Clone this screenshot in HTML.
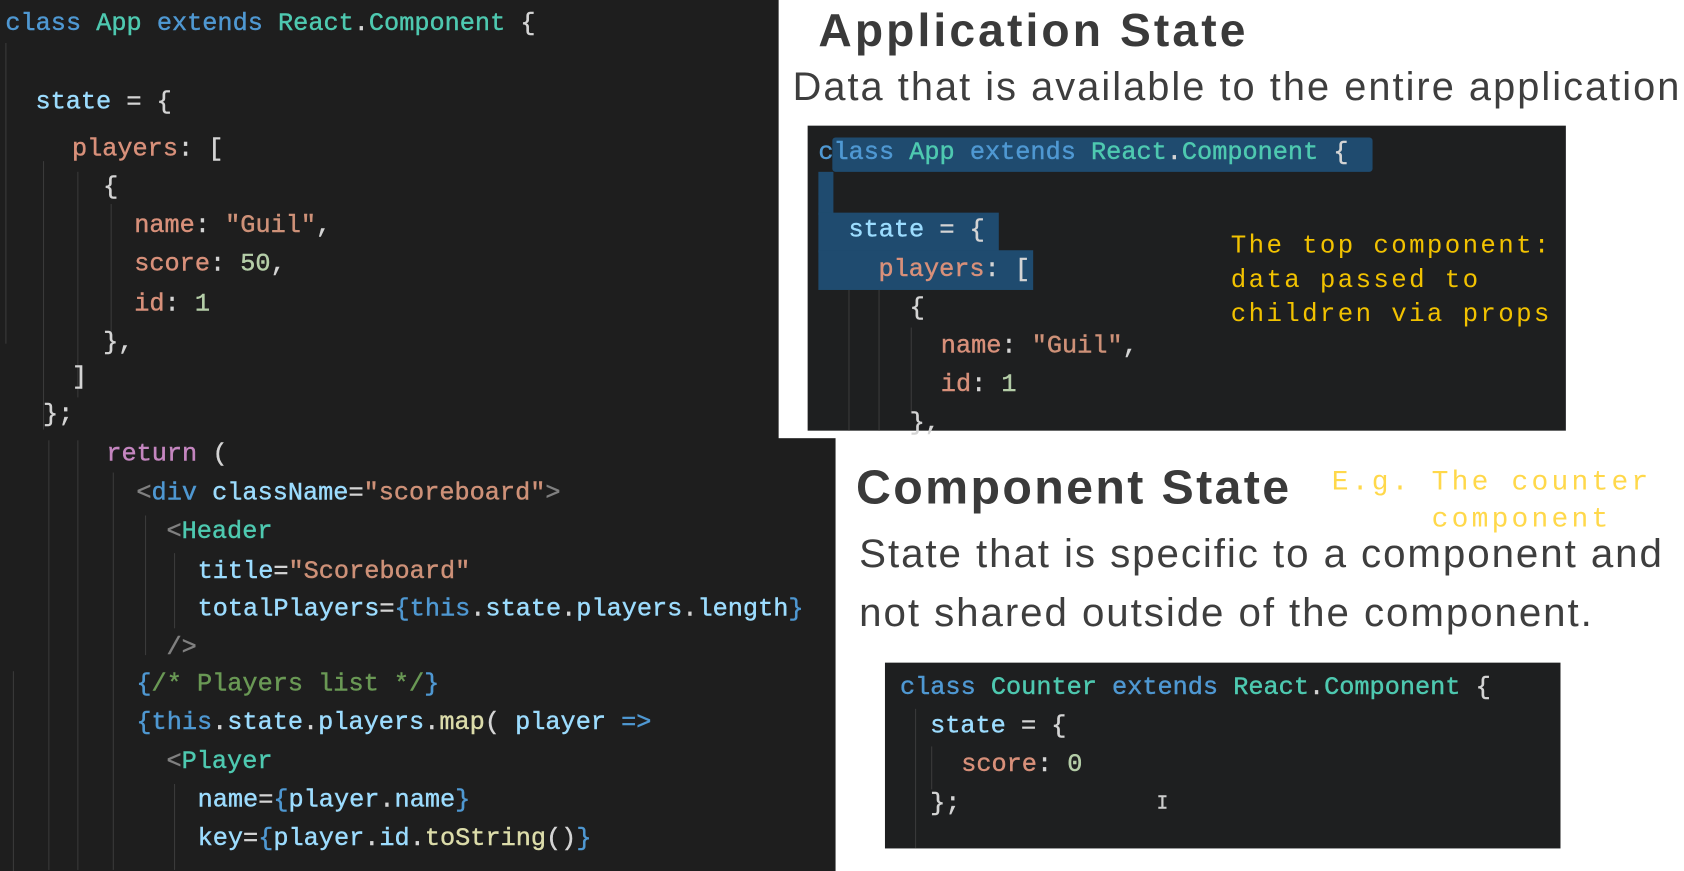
<!DOCTYPE html>
<html><head><meta charset="utf-8"><style>
html,body{margin:0;padding:0;background:#fff;overflow:hidden;width:1684px;height:871px}
#w{position:absolute;left:0;top:0;width:1568px;height:811px;transform:scale(1.07398);transform-origin:0 0;background:#fff}
.dark{position:absolute;background:#1e1e1e}
.l{position:absolute;white-space:pre;font-family:"Liberation Mono","DejaVu Sans Mono",monospace;font-size:23.5px;line-height:30px;color:#d4d4d4;transform:translateY(-15px);-webkit-text-stroke:0.4px currentColor}
.k{color:#4f98d2}.t{color:#4ec9b0}.v{color:#9cdcfe}.p{color:#d8907a}.s{color:#ce9178}.n{color:#b5cea8}.y{color:#e8c77a}.r{color:#c586c0}.g{color:#808080}.c{color:#6a9955}.f{color:#dcdcaa}.b{color:#4f98d2}
.h{position:absolute;font-family:"Liberation Sans","DejaVu Sans",sans-serif;color:#3e3e3e;white-space:pre}
.a{position:absolute;font-family:"Liberation Mono",monospace;white-space:pre;color:#f2c200}
.sel{position:absolute;background:#1f4b6f}
.gl{position:absolute;width:1px;background:#3a3a3a}
</style></head><body><div id="w">
<div class="dark" style="left:0;top:0;width:725px;height:412px"></div>
<div class="dark" style="left:0;top:408px;width:778px;height:403px"></div>
<div class="gl" style="left:5px;top:40px;height:280px"></div>
<div class="gl" style="left:40px;top:150px;height:250px"></div>
<div class="gl" style="left:72px;top:160px;height:210px"></div>
<div class="gl" style="left:103px;top:190px;height:120px"></div>
<div class="gl" style="left:45px;top:410px;height:400px"></div>
<div class="gl" style="left:72px;top:410px;height:400px"></div>
<div class="gl" style="left:105px;top:440px;height:370px"></div>
<div class="gl" style="left:135px;top:480px;height:130px"></div>
<div class="gl" style="left:162px;top:515px;height:70px"></div>
<div class="gl" style="left:12px;top:625px;height:186px"></div>
<div class="gl" style="left:162px;top:730px;height:80px"></div>
<div class="l" style="left:5px;top:23px"><span class="k">class</span> <span class="t">App</span> <span class="k">extends</span> <span class="t">React</span>.<span class="t">Component</span> {</div>
<div class="l" style="left:33px;top:96px"><span class="v">state</span> = {</div>
<div class="l" style="left:67px;top:140px"><span class="p">players</span>: [</div>
<div class="l" style="left:96px;top:175px">{</div>
<div class="l" style="left:125px;top:211px"><span class="p">name</span>: <span class="s">"Guil"</span>,</div>
<div class="l" style="left:125px;top:247px"><span class="p">score</span>: <span class="n">50</span>,</div>
<div class="l" style="left:125px;top:284px"><span class="p">id</span>: <span class="n">1</span></div>
<div class="l" style="left:96px;top:320px">},</div>
<div class="l" style="left:67px;top:352px">]</div>
<div class="l" style="left:40px;top:387px">};</div>
<div class="l" style="left:99px;top:424px"><span class="r">return</span> (</div>
<div class="l" style="left:127px;top:460px"><span class="g">&lt;</span><span class="k">div</span> <span class="v">className</span>=<span class="s">"scoreboard"</span><span class="g">&gt;</span></div>
<div class="l" style="left:155px;top:496px"><span class="g">&lt;</span><span class="t">Header</span></div>
<div class="l" style="left:184px;top:533px"><span class="v">title</span>=<span class="s">"Scoreboard"</span></div>
<div class="l" style="left:184px;top:568px"><span class="v">totalPlayers</span>=<span class="b">{</span><span class="k">this</span>.<span class="v">state</span>.<span class="v">players</span>.<span class="v">length</span><span class="b">}</span></div>
<div class="l" style="left:155px;top:604px"><span class="g">/&gt;</span></div>
<div class="l" style="left:127px;top:638px"><span class="b">{</span><span class="c">/* Players list */</span><span class="b">}</span></div>
<div class="l" style="left:127px;top:674px"><span class="b">{</span><span class="k">this</span>.<span class="v">state</span>.<span class="v">players</span>.<span class="f">map</span>( <span class="v">player</span> <span class="k">=&gt;</span></div>
<div class="l" style="left:155px;top:710px"><span class="g">&lt;</span><span class="t">Player</span></div>
<div class="l" style="left:184px;top:746px"><span class="v">name</span>=<span class="b">{</span><span class="v">player</span>.<span class="v">name</span><span class="b">}</span></div>
<div class="l" style="left:184px;top:782px"><span class="v">key</span>=<span class="b">{</span><span class="v">player</span>.<span class="v">id</span>.<span class="f">toString</span>()<span class="b">}</span></div>

<div class="h" style="left:762px;top:5px;font-size:43px;font-weight:bold;letter-spacing:2.9px;color:#3a3a3a">Application State</div>
<div class="h" style="left:738px;top:60px;font-size:37px;letter-spacing:1.9px">Data that is available to the entire application</div>

<div class="dark" style="left:752px;top:117px;width:706px;height:284px;background:#1e1f20"></div>
<div class="sel" style="left:775px;top:128px;width:503px;height:32px;border-radius:3px"></div>
<div class="sel" style="left:762px;top:160px;width:14px;height:40px"></div>
<div class="sel" style="left:762px;top:198px;width:168px;height:37px"></div>
<div class="sel" style="left:762px;top:233px;width:200px;height:37px"></div>
<div class="gl" style="left:790px;top:270px;height:131px"></div>
<div class="gl" style="left:818px;top:270px;height:131px"></div>
<div class="gl" style="left:848px;top:305px;height:80px"></div>
<div class="l" style="left:762px;top:143px"><span class="k">class</span> <span class="t">App</span> <span class="k">extends</span> <span class="t">React</span>.<span class="t">Component</span> {</div>
<div class="l" style="left:790px;top:215px"><span class="v">state</span> = {</div>
<div class="l" style="left:818px;top:252px"><span class="p">players</span>: [</div>
<div class="l" style="left:847px;top:288px">{</div>
<div class="l" style="left:876px;top:323px"><span class="p">name</span>: <span class="s">"Guil"</span>,</div>
<div class="l" style="left:876px;top:359px"><span class="p">id</span>: <span class="n">1</span></div>
<div class="l" style="left:847px;top:395px">},</div>
<div class="a" style="left:1146px;top:214px;font-size:24px;line-height:32px;letter-spacing:2.2px">The top component:
data passed to
children via props</div>

<div class="h" style="left:797px;top:428px;font-size:45px;font-weight:bold;letter-spacing:2.2px;color:#3a3a3a">Component State</div>
<div class="a" style="left:1240px;top:432px;font-size:26px;line-height:34px;letter-spacing:3px;color:#ffd84a">E.g. The counter
     component</div>
<div class="h" style="left:800px;top:494px;font-size:37.5px;letter-spacing:1.8px">State that is specific to a component and</div>
<div class="h" style="left:800px;top:549px;font-size:37.5px;letter-spacing:1.8px">not shared outside of the component.</div>

<div class="dark" style="left:824px;top:617px;width:629px;height:173px;background:#1e1f20"></div>
<div class="gl" style="left:852px;top:660px;height:130px"></div>
<div class="gl" style="left:867px;top:695px;height:40px"></div>
<div class="l" style="left:838px;top:641px"><span class="k">class</span> <span class="t">Counter</span> <span class="k">extends</span> <span class="t">React</span>.<span class="t">Component</span> {</div>
<div class="l" style="left:866px;top:677px"><span class="v">state</span> = {</div>
<div class="l" style="left:895px;top:713px"><span class="p">score</span>: <span class="n">0</span></div>
<div class="l" style="left:866px;top:749px">};</div>
<div class="l" style="left:1077px;top:749px;font-size:18px;color:#ccc">I</div>
</div></body></html>
